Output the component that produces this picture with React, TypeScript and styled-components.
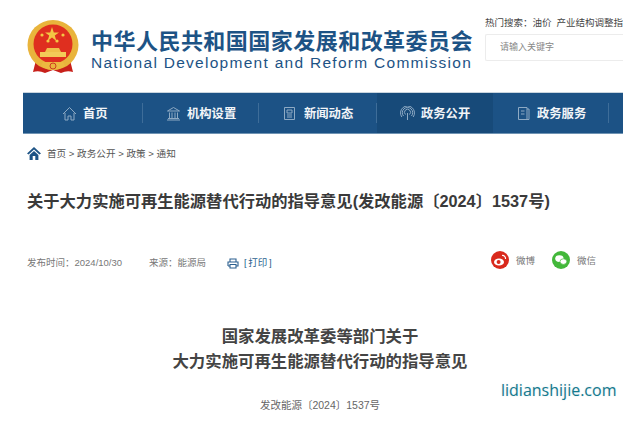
import React from 'react';
import styled, { createGlobalStyle } from 'styled-components';

const GlobalStyle = createGlobalStyle`
  html, body {
    margin: 0;
    padding: 0;
    background: #fff;
    overflow: hidden;
  }
  body {
    font-family: "Liberation Sans", "Noto Sans CJK SC", sans-serif;
  }
`;

const Page = styled.div`
  position: relative;
  width: 641px;
  height: 423px;
  overflow: hidden;
  background: #fff;
`;

const Inner = styled.div`
  width: 623px;
  overflow: hidden;
`;

const Header = styled.header`
  display: flex;
  height: 92px;
  padding-left: 27px;
  box-sizing: border-box;
`;

const Brand = styled.div`
  display: flex;
  width: 458px;
  padding-top: 20px;
  box-sizing: border-box;
`;

const BrandText = styled.div`
  margin-left: 12px;
  padding-top: 10px;
`;

const BrandCn = styled.div`
  font-size: 22px;
  line-height: 23px;
  font-weight: 700;
  color: #1d5385;
  letter-spacing: 0.47px;
  white-space: nowrap;
`;

const BrandEn = styled.div`
  font-size: 15.5px;
  line-height: 17px;
  margin-top: 1px;
  color: #1d5385;
  letter-spacing: 1.28px;
  white-space: nowrap;
`;

const SearchArea = styled.div`
  flex: 1;
  min-width: 0;
  padding-top: 16px;
`;

const HotWords = styled.div`
  font-size: 9.5px;
  line-height: 13px;
  color: #444;
  white-space: nowrap;
  span {
    margin-left: 5px;
  }
`;

const SearchBox = styled.div`
  margin-top: 5px;
  height: 27px;
  width: 138px;
  padding-left: 14px;
  box-sizing: border-box;
  border: 1px solid #ececec;
  border-right: none;
  border-radius: 2px 0 0 2px;
  font-size: 9px;
  line-height: 25px;
  color: #888;
`;

const Nav = styled.nav`
  display: flex;
  margin-left: 23px;
  height: 42px;
  box-sizing: border-box;
  background: #1c5285;
  border-top: 1px solid #c9d5df;
  border-bottom: 1px solid #6f93b3;
`;

const NavItem = styled.div<{ $width: number; $active?: boolean; $pad: number }>`
  position: relative;
  display: flex;
  align-items: center;
  width: ${(p) => p.$width}px;
  padding-left: ${(p) => p.$pad}px;
  box-sizing: border-box;
  background: ${(p) => (p.$active ? '#174a79' : 'transparent')};
  &::after {
    content: '';
    display: ${(p) => (p.$active ? 'none' : 'block')};
    position: absolute;
    right: 0;
    top: 10px;
    height: 20px;
    width: 1px;
    background: #3e6d99;
  }
`;

const NavIcon = styled.svg`
  width: 15px;
  height: 15px;
  flex: none;
  fill: none;
  stroke: #8eaac4;
  stroke-width: 1;
`;

const NavLabel = styled.span<{ $gap: number }>`
  margin-left: ${(p) => p.$gap}px;
  font-size: 12.3px;
  font-weight: 700;
  color: #f2f5f8;
  white-space: nowrap;
`;

const Crumbs = styled.div`
  display: flex;
  align-items: center;
  height: 16px;
  margin: 11px 0 0 27px;
  font-size: 9.6px;
  color: #555;
  white-space: nowrap;
`;

const CrumbIcon = styled.svg`
  width: 14px;
  height: 13px;
  margin-right: 6px;
  fill: #1d5385;
`;

const Headline = styled.h1`
  margin: 29px 0 0 27px;
  font-size: 16.3px;
  line-height: 22px;
  font-weight: 700;
  color: #3a3a3a;
  white-space: nowrap;
`;

const Meta = styled.div`
  display: flex;
  align-items: center;
  height: 24px;
  margin: 38px 0 0 27px;
  font-size: 9.5px;
  color: #777;
  white-space: nowrap;
`;

const MetaGap = styled.span<{ $left: number }>`
  margin-left: ${(p) => p.$left}px;
`;

const PrintLink = styled.span`
  margin-left: 5px;
  color: #2b5f8f;
  word-spacing: -1px;
`;

const PrintIcon = styled.svg`
  width: 12px;
  height: 11px;
  margin: 2px 0 0 21px;
  fill: none;
  stroke: #2b5f8f;
  stroke-width: 1.1;
`;

const Share = styled.div`
  display: flex;
  align-items: center;
  margin: -4px 27px 0 auto;
`;

const ShareItem = styled.div`
  display: flex;
  align-items: center;
  margin-left: 17px;
  color: #777;
`;

const ShareDot = styled.svg`
  width: 18px;
  height: 18px;
  margin-right: 7px;
`;

const ArticleTitle = styled.h2`
  margin: 50px 0 0;
  width: 640px;
  text-align: center;
  font-size: 16.4px;
  line-height: 25px;
  font-weight: 700;
  color: #444;
`;

const DocNumber = styled.div`
  margin-top: 24px;
  width: 640px;
  text-align: center;
  font-size: 10.5px;
  line-height: 14px;
  color: #666;
`;

const Watermark = styled.div`
  position: absolute;
  left: 501px;
  top: 380px;
  font-family: "Open Sans", sans-serif;
  font-size: 16px;
  font-weight: 500;
  line-height: 20px;
  color: #14798e;
  text-shadow: 0 0 2px #d5e4e8;
`;

const Emblem = () => (
  <svg width="52" height="56" viewBox="0 0 52 56" style={{ flex: 'none' }}>
    <path d="M9 40 L6 52 Q12 50 18 53 L26 50 L34 53 Q40 50 46 52 L43 40 Z" fill="#c8201a" />
    <ellipse cx="26" cy="25" rx="25.5" ry="25" fill="#e9b43c" />
    <ellipse cx="26" cy="24" rx="19.5" ry="19.5" fill="#df2f1f" />
    <polygon points="25,7 26.8,12.4 32,12.4 27.8,15.6 29.4,21 25,17.6 20.6,21 22.2,15.6 18,12.4 23.2,12.4" fill="#f3c744" />
    <circle cx="15" cy="15" r="1.6" fill="#f3c744" />
    <circle cx="36" cy="15" r="1.6" fill="#f3c744" />
    <circle cx="21" cy="21" r="1.6" fill="#f3c744" />
    <circle cx="30" cy="21" r="1.6" fill="#f3c744" />
    <path d="M18 32 L20 28 H32 L34 32 Z" fill="#f0c04a" />
    <rect x="13" y="32" width="26" height="5" fill="#f3cb58" />
    <path d="M14 46 Q26 54 38 46 L36 42 H16 Z" fill="#ecba40" />
    <circle cx="26" cy="46" r="3" fill="#e9b43c" stroke="#c8201a" strokeWidth="0.8" />
  </svg>
);

const navItems = [
  {
    label: '首页',
    width: 120,
    pad: 39,
    gap: 6,
    icon: <path d="M1 8 L7.5 1.5 L14 8 M3 7 V14 H6 V10 H9 V14 H12 V7" />,
  },
  {
    label: '机构设置',
    width: 116,
    pad: 23,
    gap: 6,
    icon: <path d="M1.5 5 L7.5 1.5 L13.5 5 Z M1 14 H14 M2 12.5 H13 M3.5 6.5 V12 M6 6.5 V12 M9 6.5 V12 M11.5 6.5 V12" />,
  },
  {
    label: '新闻动态',
    width: 118,
    pad: 23,
    gap: 7,
    icon: <path d="M2.5 1.5 H12.5 V13.5 H2.5 Z M5 4 H10 V7 H5 Z M5 9 H10 M5 11 H10" />,
  },
  {
    label: '政务公开',
    width: 116,
    pad: 23,
    gap: 6,
    active: true,
    icon: <path d="M7.5 14 V7 M5.5 8.5 A3 3 0 1 1 9.5 8.5 M3.5 10 A5.2 5.2 0 1 1 11.5 10 M1.8 11 A7 7 0 1 1 13.2 11" />,
  },
  {
    label: '政务服务',
    width: 116,
    pad: 23,
    gap: 6,
    icon: <path d="M2.5 1.5 H11 V13.5 H2.5 Z M11 3 H13 V13.5 H11 M5 5 H8.5 M5 8 H8.5" />,
  },
];

const App: React.FC = () => {
  return (
    <Page>
      <GlobalStyle />
      <Inner>
        <Header>
          <Brand>
            <Emblem />
            <BrandText>
              <BrandCn>中华人民共和国国家发展和改革委员会</BrandCn>
              <BrandEn>National Development and Reform Commission</BrandEn>
            </BrandText>
          </Brand>
          <SearchArea>
            <HotWords>
              热门搜索：油价<span>产业结构调整指</span>
            </HotWords>
            <SearchBox>请输入关键字</SearchBox>
          </SearchArea>
        </Header>

        <Nav>
          {navItems.map((item) => (
            <NavItem key={item.label} $width={item.width} $pad={item.pad} $active={item.active}>
              <NavIcon viewBox="0 0 15 15">{item.icon}</NavIcon>
              <NavLabel $gap={item.gap}>{item.label}</NavLabel>
            </NavItem>
          ))}
        </Nav>

        <Crumbs>
          <CrumbIcon viewBox="0 0 14 13">
            <path d="M7 0 L14 6.5 L12.4 7.5 L7 2.6 L1.6 7.5 L0 6.5 Z M2.6 8 L7 4 L11.4 8 V13 H8.3 V9 H5.7 V13 H2.6 Z" />
          </CrumbIcon>
          首页 &gt; 政务公开 &gt; 政策 &gt; 通知
        </Crumbs>

        <Headline>关于大力实施可再生能源替代行动的指导意见(发改能源〔2024〕1537号)</Headline>

        <Meta>
          发布时间：2024/10/30
          <MetaGap $left={27}>来源：能源局</MetaGap>
          <PrintIcon viewBox="0 0 12 11">
            <path d="M3 3.5 V1 H9 V3.5 M1 8 V4 H11 V8 H9 M3 8 H1 M3 6.5 H9 V10 H3 Z" />
          </PrintIcon>
          <PrintLink>[ 打印 ]</PrintLink>
          <Share>
            <ShareItem>
              <ShareDot viewBox="0 0 18 18">
                <circle cx="9" cy="9" r="9" fill="#d9291c" />
                <ellipse cx="8" cy="11" rx="5" ry="3.6" fill="#fff" />
                <circle cx="7.6" cy="11" r="2" fill="#d9291c" />
                <path d="M11 4.5 A3 3 0 0 1 14.5 8" fill="none" stroke="#fff" strokeWidth="1.2" />
              </ShareDot>
              微博
            </ShareItem>
            <ShareItem>
              <ShareDot viewBox="0 0 18 18">
                <circle cx="9" cy="9" r="9" fill="#43b83a" />
                <ellipse cx="7.4" cy="7.6" rx="4.2" ry="3.4" fill="#fff" />
                <ellipse cx="11.4" cy="10.6" rx="3.4" ry="2.8" fill="#fff" stroke="#43b83a" strokeWidth="0.7" />
              </ShareDot>
              微信
            </ShareItem>
          </Share>
        </Meta>
      </Inner>

      <ArticleTitle>
        国家发展改革委等部门关于
        <br />
        大力实施可再生能源替代行动的指导意见
      </ArticleTitle>
      <DocNumber>发改能源〔2024〕1537号</DocNumber>
      <Watermark>lidianshijie.com</Watermark>
    </Page>
  );
};

export default App;
